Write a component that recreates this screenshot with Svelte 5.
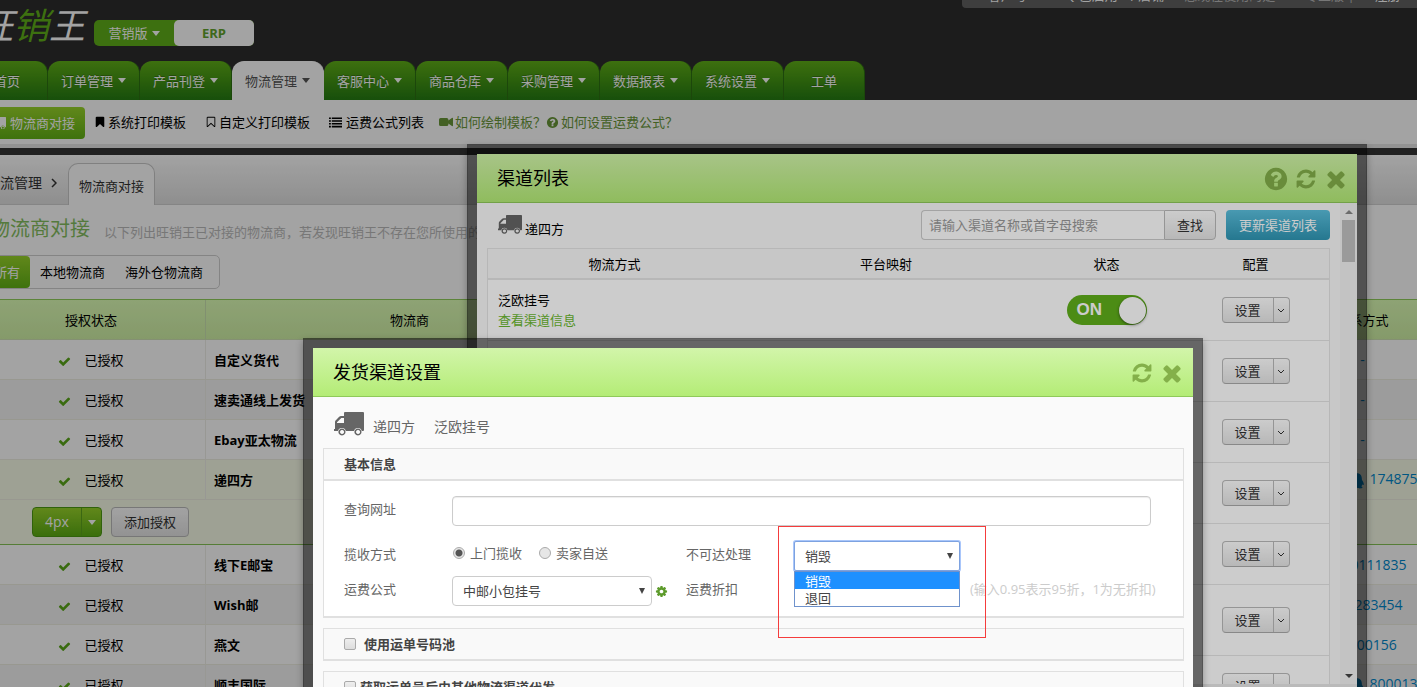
<script>
    const navItems = [
        { name: '首页', menu: false },
        { name: '订单管理', menu: true },
        { name: '产品刊登', menu: true },
        { name: '物流管理', menu: true, active: true },
        { name: '客服中心', menu: true },
        { name: '商品仓库', menu: true },
        { name: '采购管理', menu: true },
        { name: '数据报表', menu: true },
        { name: '系统设置', menu: true },
        { name: '工单', menu: false }
    ];

    const carriers = [
        { name: '自定义货代', contact: '-' },
        { name: '速卖通线上发货', contact: '-' },
        { name: 'Ebay亚太物流', contact: '-' },
        { name: '递四方', phone: '0755-8888', contact: '1748755620', qq: true, open: true },
        { name: '线下E邮宝', contact: '13800111835' },
        { name: 'Wish邮', contact: '0755283454' },
        { name: '燕文', contact: '400-00156' },
        { name: '顺丰国际', phone: '0755-8888', contact: '8000132460', qq: true }
    ];

    const channels = [
        { name: '泛欧挂号', on: true },
        { name: '', on: false },
        { name: '', on: false },
        { name: '', on: false },
        { name: '', on: false },
        { name: '', on: false, tall: true },
        { name: '', on: false }
    ];

    const filters = ['所有', '本地物流商', '海外仓物流商'];
    const undeliverable = ['销毁', '退回'];

    const icons = {
        times: 'M1490 1322q0 40-28 68l-136 136q-28 28-68 28t-68-28l-294-294-294 294q-28 28-68 28t-68-28l-136-136q-28-28-28-68t28-68l294-294-294-294q-28-28-28-68t28-68l136-136q28-28 68-28t68 28l294 294 294-294q28-28 68-28t68 28l136 136q28 28 28 68t-28 68l-294 294 294 294q28 28 28 68z',
        check: 'M1671 566q0 40-28 68l-724 724-136 136q-28 28-68 28t-68-28l-136-136-362-362q-28-28-28-68t28-68l136-136q28-28 68-28t68 28l294 295 656-657q28-28 68-28t68 28l136 136q28 28 28 68z',
        refresh: 'M1639 1056q0 5-1 7-64 268-268 434.500t-478 166.500q-146 0-282.500-55t-243.500-157l-129 129q-19 19-45 19t-45-19-19-45v-448q0-26 19-45t45-19h448q26 0 45 19t19 45-19 45l-137 137q71 66 161 102t187 36q134 0 250-65t186-179q11-17 53-117 8-23 30-23h192q13 0 22.500 9.500t9.500 22.500zm25-800v448q0 26-19 45t-45 19h-448q-26 0-45-19t-19-45 19-45l138-138q-148-137-349-137-134 0-250 65t-186 179q-11 17-53 117-8 23-30 23h-199q-13 0-22.500-9.500t-9.500-22.500v-7q65-268 270-434.500t480-166.500q146 0 284 55.500t245 156.500l130-129q19-19 45-19t45 19 19 45z',
        question: 'M1024 1376v-192q0-14-9-23t-23-9h-192q-14 0-23 9t-9 23v192q0 14 9 23t23 9h192q14 0 23-9t9-23zm256-672q0-88-55.500-163t-138.500-116-170-41q-243 0-371 213-15 24 8 42l132 100q7 6 19 6 16 0 25-12 53-68 86-92 34-24 86-24 48 0 85.500 26t37.500 59q0 38-20 61t-68 45q-63 28-115.500 86.500t-52.500 125.500v36q0 14 9 23t23 9h192q14 0 23-9t9-23q0-19 21.500-49.500t54.500-49.500q32-18 49-28.500t46-35 44.500-48 28-60.500 12.500-81zm384 192q0 209-103 385.500t-279.500 279.500-385.500 103-385.500-103-279.500-279.500-103-385.500 103-385.500 279.500-279.500 385.500-103 385.500 103 279.500 279.500 103 385.500z',
        bookmark: 'M1420 128q23 0 44 9 33 13 52.500 41t19.500 62v1289q0 34-19.500 62t-52.500 41q-19 8-44 8-48 0-83-32l-441-424-441 424q-36 33-83 33-23 0-44-9-33-13-52.500-41t-19.500-62v-1289q0-34 19.500-62t52.500-41q21-9 44-9h1048z',
        bookmarkOpen: 'M1408 256h-1024v1242l423-406 89-85 89 85 423 406v-1242zm12-128q23 0 44 9 33 13 52.500 41t19.500 62v1289q0 34-19.500 62t-52.500 41q-19 8-44 8-48 0-83-32l-441-424-441 424q-36 33-83 33-23 0-44-9-33-13-52.500-41t-19.500-62v-1289q0-34 19.500-62t52.500-41q21-9 44-9h1048z',
        list: 'M0 192h256v224H0zM384 192h1408v224H384zM0 576h256v224H0zM384 576h1408v224H384zM0 960h256v224H0zM384 960h1408v224H384zM0 1344h256v224H0zM384 1344h1408v224H384z',
        video: 'M200 384h800q200 0 200 200v130l450-330q142-60 142 60v904q0 120-142 60l-450-330v130q0 200-200 200H200q-200 0-200-200V584q0-200 200-200z',
        cog: 'M1152 896q0-106-75-181t-181-75-181 75-75 181 75 181 181 75 181-75 75-181zm512-109v222q0 12-8 23t-20 13l-185 28q-19 54-39 91 35 50 107 138 10 12 10 25t-9 23q-27 37-99 108t-94 71q-12 0-26-9l-138-108q-44 23-91 38-16 136-29 186-7 28-36 28h-222q-14 0-24.500-8.500t-11.500-21.500l-28-184q-49-16-90-37l-141 107q-10 9-25 9-14 0-25-11-126-114-165-168-7-10-7-23 0-12 8-23 15-21 51-66.500t54-70.500q-27-50-41-99l-183-27q-13-2-21-12.500t-8-23.500v-222q0-12 8-23t19-13l186-28q14-46 39-92-40-57-107-138-10-12-10-24 0-10 9-23 26-36 98.500-107.500t94.500-71.500q13 0 26 10l138 107q44-23 91-38 16-136 29-186 7-28 36-28h222q14 0 24.500 8.500t11.500 21.500l28 184q49 16 90 37l142-107q9-9 24-9 13 0 25 10 129 119 165 170 7 8 7 22 0 12-8 23-15 21-51 66.500t-54 70.500q26 50 41 98l183 28q13 2 21 12.500t8 23.500z',
        qq: 'M896 128c300 0 480 220 480 520 0 60 0 100 20 150 120 160 190 330 170 470-10 60-60 50-130-60-20 90-60 160-110 220 90 50 130 100 110 150-30 80-420 90-540 0-120 90-510 80-540 0-20-50 20-100 110-150-50-60-90-130-110-220-70 110-120 120-130 60-20-140 50-310 170-470 20-50 20-90 20-150 0-300 180-520 480-520z'
    };

    let pickup = $state('door');
    let handling = $state('销毁');
    let filter = $state('所有');
</script>

{#snippet icon(name, size)}
    <svg class="icon" width={size} height={size} viewBox="0 0 1792 1792" aria-hidden="true">
        <path d={icons[name]} fill="currentColor" fill-rule="evenodd" />
    </svg>
{/snippet}

{#snippet truck(width)}
    <svg class="icon" {width} viewBox="0 0 30 24" aria-hidden="true">
        <path
            fill="currentColor"
            fill-rule="evenodd"
            d="M10 1q0-1 1-1h18q1 0 1 1v17q0 1-1 1h-1.200a4 4 0 0 0-7.800 0h-8.200a4 4 0 0 0-7.800 0H0v-2h1v-7q0-1 .8-1.800l3.400-3.400Q6 4 7 4h3zM3 11h7V6H7.300L3 10.300z"
        />
        <path
            fill="currentColor"
            fill-rule="evenodd"
            d="M8 16.500a3.500 3.500 0 1 1-.1 0zM8 18a2 2 0 1 0 .1 0zM24 16.500a3.500 3.500 0 1 1-.1 0zM24 18a2 2 0 1 0 .1 0z"
        />
    </svg>
{/snippet}

<div class="screen">
    <div class="page">
        <header class="top">
            <div class="brand">
                <h1 class="logo">旺<span>销</span>王</h1>
                <div class="edition">
                    <button class="edition-menu">营销版 <i class="caret"></i></button>
                    <button class="edition-erp">ERP</button>
                </div>
            </div>
            <div class="account">
                <span>客户号:10</span>
                <span>Q 已启用1个店铺</span>
                <span class="plan">您现在使用的是 ERP 专业版 |</span>
                <span>注册</span>
                <span>|</span>
            </div>
        </header>

        <nav class="nav">
            {#each navItems as item}
                <a href="#nav" class="nav-item" class:active={item.active} class:plain={!item.menu}>
                    {item.name}
                    {#if item.menu}<i class="caret"></i>{/if}
                </a>
            {/each}
        </nav>

        <div class="subnav">
            <a href="#dock" class="current">{@render truck(16)}物流商对接</a>
            <a href="#sys">{@render icon('bookmark', 12)}系统打印模板</a>
            <a href="#own">{@render icon('bookmarkOpen', 12)}自定义打印模板</a>
            <a href="#fee" class="fee">{@render icon('list', 13)}运费公式列表</a>
            <span class="help">
                <a href="#video">{@render icon('video', 14)}如何绘制模板？</a>
                <a href="#formula">{@render icon('question', 13)}如何设置运费公式？</a>
            </span>
        </div>
        <div class="divider"></div>

        <div class="crumbs">
            <a href="#logistics">物流管理</a>
            <svg width="6" height="10" viewBox="0 0 6 10" aria-hidden="true">
                <path d="M1 1l4 4-4 4" fill="none" stroke="currentColor" stroke-width="1.500" />
            </svg>
            <span class="crumb-tab">物流商对接</span>
        </div>

        <div class="content">
            <div class="heading">
                <h2>物流商对接</h2>
                <p>以下列出旺销王已对接的物流商，若发现旺销王不存在您所使用的物流商，请联系我们</p>
            </div>

            <div class="filters">
                {#each filters as f}
                    <button class:selected={f === filter} onclick={() => (filter = f)}>{f}</button>
                {/each}
            </div>

            <table class="carriers">
                <thead>
                    <tr>
                        <th class="col-status">授权状态</th>
                        <th class="col-name">物流商</th>
                        <th></th>
                        <th class="col-contact">联系方式</th>
                    </tr>
                </thead>
                <tbody>
                    {#each carriers as row, i}
                        <tr class:alt={i % 2 === 1} class:open={row.open}>
                            <td class="status">
                                <span class="ok">{@render icon('check', 13)}</span>已授权
                            </td>
                            <td class="name">{row.name}</td>
                            <td></td>
                            <td class="contact">
                                {#if row.phone}<span>{row.phone}</span>{/if}
                                {#if row.qq}{@render icon('qq', 18)}{/if}
                                <a href="#contact">{row.contact}</a>
                            </td>
                        </tr>
                        {#if row.open}
                            <tr class="detail">
                                <td colspan="4">
                                    <div class="detail-actions">
                                        <span class="split-green">
                                            <button>4px</button>
                                            <button aria-label="更多"><i class="caret"></i></button>
                                        </span>
                                        <button class="btn">添加授权</button>
                                    </div>
                                </td>
                            </tr>
                        {/if}
                    {/each}
                </tbody>
            </table>
        </div>
    </div>

    <div class="shade"></div>

    <section class="modal modal-list" aria-label="渠道列表">
        <div class="modal-head">
            <h3>渠道列表</h3>
            <div class="tools">
                <button aria-label="帮助">{@render icon('question', 26)}</button>
                <button aria-label="刷新">{@render icon('refresh', 22)}</button>
                <button aria-label="关闭">{@render icon('times', 26)}</button>
            </div>
        </div>
        <div class="modal-scroll">
            <div class="list-body">
                <div class="toolbar">
                    <div class="carrier">{@render truck(24)}<span>递四方</span></div>
                    <div class="search">
                        <input type="text" aria-label="搜索渠道" placeholder="请输入渠道名称或首字母搜索" />
                        <button class="btn">查找</button>
                    </div>
                    <button class="btn-blue">更新渠道列表</button>
                </div>
                <table class="channels">
                    <thead>
                        <tr>
                            <th class="c-method">物流方式</th>
                            <th class="c-map">平台映射</th>
                            <th class="c-state">状态</th>
                            <th>配置</th>
                        </tr>
                    </thead>
                    <tbody>
                        {#each channels as channel}
                            <tr class:tall={channel.tall}>
                                <td class="method">
                                    {#if channel.name}
                                        <div>{channel.name}</div>
                                        <a href="#info">查看渠道信息</a>
                                    {/if}
                                </td>
                                <td></td>
                                <td>
                                    {#if channel.on}
                                        <label class="switch">
                                            <input type="checkbox" aria-label="启用渠道" checked />
                                            <span>ON</span>
                                            <i></i>
                                        </label>
                                    {/if}
                                </td>
                                <td>
                                    <span class="split">
                                        <button>设置</button>
                                        <button aria-label="更多">
                                            <svg width="8" height="5" viewBox="0 0 8 5" aria-hidden="true">
                                                <path d="M1 1l3 3 3-3" fill="none" stroke="currentColor" />
                                            </svg>
                                        </button>
                                    </span>
                                </td>
                            </tr>
                        {/each}
                    </tbody>
                </table>
            </div>
            <div class="scrollbar">
                <i class="arrow up"></i>
                <i class="thumb"></i>
                <i class="arrow down"></i>
            </div>
        </div>
        <div class="modal-foot"></div>
    </section>

    <div class="shade"></div>

    <section class="modal modal-form" aria-label="发货渠道设置">
        <div class="modal-head">
            <h3>发货渠道设置</h3>
            <div class="tools">
                <button aria-label="刷新">{@render icon('refresh', 22)}</button>
                <button aria-label="关闭">{@render icon('times', 26)}</button>
            </div>
        </div>
        <div class="form-body">
            <div class="route">
                {@render truck(30)}
                <span>递四方</span>
                <span>泛欧挂号</span>
            </div>

            <div class="panel">
                <div class="panel-title">基本信息</div>
                <div class="fields">
                    <label class="label" for="url">查询网址</label>
                    <input class="box wide" id="url" type="text" />

                    <span class="label second">揽收方式</span>
                    <div class="radios second">
                        <label><input type="radio" name="pickup" value="door" bind:group={pickup} />上门揽收</label>
                        <label><input type="radio" name="pickup" value="self" bind:group={pickup} />卖家自送</label>
                    </div>
                    <label class="label second" for="handling">不可达处理</label>
                    <div class="select handling second">
                        <select id="handling" bind:value={handling}>
                            {#each undeliverable as option}
                                <option value={option}>{option}</option>
                            {/each}
                        </select>
                        <i class="arrow down"></i>
                        <ul class="options">
                            {#each undeliverable as option}
                                <li class:chosen={option === handling}>{option}</li>
                            {/each}
                        </ul>
                        <div class="mark"></div>
                    </div>

                    <label class="label" for="formula">运费公式</label>
                    <div class="formula">
                        <div class="select">
                            <select id="formula"><option>中邮小包挂号</option></select>
                            <i class="arrow down"></i>
                        </div>
                        <button class="gear" aria-label="设置公式">{@render icon('cog', 13)}</button>
                    </div>
                    <label class="label" for="discount">运费折扣</label>
                    <div class="discount">
                        <input class="box" id="discount" type="text" />
                        <span>(输入0.95表示95折，1为无折扣)</span>
                    </div>
                </div>
            </div>

            <div class="panel">
                <label class="panel-title check"><input type="checkbox" />使用运单号码池</label>
            </div>
            <div class="panel">
                <label class="panel-title check tight"><input type="checkbox" />获取运单号后由其他物流渠道代发</label>
            </div>
        </div>
    </section>
</div>

<style>
    :global(body) {
        margin: 0;
        background: #fff;
    }
    .screen {
        position: relative;
        height: 100vh;
        overflow: hidden;
        font: 13px/20px "Open Sans", "Noto Sans CJK SC", sans-serif;
        color: #000;
    }
    .screen * {
        box-sizing: border-box;
    }
    a {
        color: inherit;
        text-decoration: none;
    }
    button, input, select {
        margin: 0;
        padding: 0;
        font: inherit;
        color: inherit;
    }
    button {
        border: 0;
        background: none;
        cursor: pointer;
    }
    h1, h2, h3, p, ul {
        margin: 0;
        padding: 0;
        font-weight: normal;
    }
    .icon {
        flex: none;
    }
    .caret {
        display: inline-block;
        border: 4px solid transparent;
        border-top: 5px solid currentColor;
        border-bottom: 0;
    }
    .shade {
        position: absolute;
        inset: 0;
        background: rgba(0, 0, 0, 0.2);
    }

    /* page header */
    .page {
        margin: 0 -46px 0 -33px;
    }
    .top {
        display: flex;
        justify-content: space-between;
        align-items: flex-start;
        height: 61px;
        background: #2c2c2c;
    }
    .brand {
        display: flex;
        align-items: flex-start;
        padding-left: 10px;
    }
    .logo {
        width: 117px;
        font-size: 36px;
        line-height: 52px;
        font-style: italic;
        color: #fff;
        white-space: nowrap;
    }
    .logo span {
        color: #61af19;
    }
    .edition {
        display: flex;
        margin-top: 20px;
        border-radius: 5px;
        background: #61af19;
    }
    .edition button {
        display: flex;
        align-items: center;
        justify-content: center;
        gap: 4px;
        width: 80px;
        height: 26px;
        border-radius: 5px;
        color: #fff;
    }
    .edition .edition-erp {
        background: #fff;
        color: #62a32d;
        font-weight: bold;
    }
    .account {
        display: flex;
        gap: 20px;
        width: 501px;
        height: 28px;
        margin-top: -20px;
        padding: 5px 0 0 26px;
        border-radius: 4px;
        background: #626262;
        color: #fff;
        white-space: nowrap;
    }
    .account .plan {
        color: #bbb;
    }
    .nav {
        display: flex;
        background: #2e2e2e;
    }
    .nav-item {
        display: flex;
        align-items: center;
        justify-content: center;
        gap: 5px;
        width: 92px;
        height: 39px;
        border-radius: 12px 12px 0 0;
        border-right: 1px solid #2c7012;
        background: linear-gradient(#61b018, #257c12);
        color: #fff;
        text-shadow: 0 -1px 0 rgba(0, 0, 0, 0.25);
    }
    .nav-item.plain {
        width: 81px;
    }
    .nav-item.active {
        background: #fff;
        border-color: #fff;
        color: #555;
        text-shadow: none;
    }
    .subnav {
        display: flex;
        align-items: center;
        gap: 19px;
        height: 44px;
        padding: 0 10px;
        background: #fff;
    }
    .subnav a {
        display: flex;
        align-items: center;
        gap: 2px;
    }
    .subnav .fee {
        gap: 4px;
    }
    .subnav .current {
        gap: 4px;
        width: 108px;
        height: 32px;
        padding-right: 10px;
        margin: 2px -10px 0 0;
        justify-content: flex-end;
        border-radius: 4px;
        background: linear-gradient(#99d52b, #62b316);
        color: #fff;
    }
    .help {
        display: flex;
        margin-left: -4px;
        color: #6a983a;
    }
    .divider {
        height: 11px;
        border-top: 4px solid #e6e6e6;
        background: #353535;
    }
    .crumbs {
        display: flex;
        align-items: center;
        gap: 9px;
        height: 50px;
        padding: 6px 19px 0;
        border-bottom: 1px solid #d1d1d1;
        background: linear-gradient(#fff, #e0e0e0);
        color: #333;
        font-size: 14px;
    }
    .crumb-tab {
        align-self: flex-end;
        height: 42px;
        margin: 0 0 -1px 2px;
        padding: 12px 10px 0;
        border: 1px solid #c8c8c8;
        border-bottom: 0;
        border-radius: 10px 10px 0 0;
        background: #fff;
        font-size: 13px;
    }

    /* carriers page */
    .content {
        padding: 0 0 0 10px;
        background: #fff;
    }
    .heading {
        display: flex;
        align-items: flex-end;
        gap: 14px;
        padding: 10px 0 13px 13px;
        white-space: nowrap;
    }
    .heading h2 {
        font-size: 20px;
        line-height: 27px;
        color: #85c060;
    }
    .heading p {
        color: #bbb;
    }
    .filters {
        display: flex;
        width: fit-content;
        margin-left: 6px;
        padding: 0 6px 0 0;
        border: 1px solid #d0d0d0;
        border-radius: 5px;
    }
    .filters button {
        height: 32px;
        padding: 0 10px;
        border-radius: 4px;
    }
    .filters .selected {
        background: linear-gradient(#99d52b, #62b316);
        color: #fff;
    }
    .carriers {
        width: 100%;
        margin-top: 10px;
        border-collapse: separate;
        border-spacing: 0;
        table-layout: fixed;
        border-top: 1px solid #92cf5c;
    }
    .carriers th {
        height: 40px;
        padding: 0;
        border-bottom: 1px solid #cfe3b5;
        border-right: 1px solid #cbe2b0;
        background: linear-gradient(#dfffb7, #d1f2a7);
        font-weight: normal;
    }
    .col-status {
        width: 229px;
    }
    .col-name {
        width: 408px;
    }
    .col-contact {
        width: 200px;
    }
    .carriers td {
        height: 40px;
        padding: 0;
        border-bottom: 1px solid #efefe3;
        border-right: 1px solid #efefe9;
    }
    .carriers .alt td {
        background: #f6f6f6;
    }
    .carriers .open td, .carriers .detail td {
        background: #f8fde9;
    }
    .carriers .detail td {
        height: 45px;
        border-bottom-color: #86c555;
    }
    .carriers .status {
        text-align: center;
    }
    .ok {
        margin-right: 13px;
        color: #5aa818;
    }
    .ok .icon, .contact .icon {
        vertical-align: middle;
    }
    .carriers .name {
        padding-left: 8px;
        font-weight: bold;
    }
    .carriers .contact {
        color: #0088cc;
        font-size: 14px;
        text-align: center;
        white-space: nowrap;
    }
    .detail-actions {
        display: flex;
        gap: 9px;
        padding-left: 55px;
    }
    .split-green {
        display: flex;
        border: 1px solid #4b9a12;
        border-radius: 4px;
        background: linear-gradient(#99d52b, #5cad14);
        color: #fff;
        font-size: 14px;
    }
    .split-green button {
        display: flex;
        align-items: center;
        justify-content: center;
        width: 48px;
        height: 28px;
    }
    .split-green button + button {
        width: 20px;
        border-left: 1px solid #5da31d;
    }
    .btn {
        height: 30px;
        padding: 0 12px;
        border: 1px solid #bbb;
        border-radius: 4px;
        background: linear-gradient(#fff, #e6e6e6);
        color: #333;
    }

    /* modals */
    .modal {
        position: absolute;
        width: 900px;
        border: 10px solid rgba(0, 0, 0, 0.5);
        background: #fafafa;
        background-clip: padding-box;
        box-shadow: 0 3px 7px rgba(0, 0, 0, 0.3);
    }
    .modal-list {
        left: 467px;
        top: 144px;
    }
    .modal-form {
        left: 303px;
        top: 338px;
    }
    .modal-head {
        display: flex;
        align-items: center;
        justify-content: space-between;
        height: 49px;
        padding: 0 8px 0 20px;
        border-bottom: 1px solid #8fca5a;
        background: linear-gradient(#d2f5aa, #b4ec76);
    }
    .modal-head h3 {
        font-size: 18px;
        line-height: 24px;
    }
    .tools {
        display: flex;
        align-items: center;
        gap: 6px;
        padding-top: 2px;
        color: #84b04a;
    }
    .tools button, .gear {
        display: flex;
    }
    .modal-scroll {
        display: flex;
        height: 481px;
        overflow: hidden;
    }
    .list-body {
        flex: 1;
        padding: 7px 10px;
    }
    .toolbar {
        display: flex;
        align-items: center;
        gap: 10px;
        margin-bottom: 8px;
    }
    .carrier {
        display: flex;
        align-items: flex-end;
        gap: 3px;
        flex: 1;
        height: 30px;
        padding-left: 11px;
    }
    .carrier .icon {
        align-self: center;
        color: #666;
    }
    .carrier span {
        line-height: 22px;
    }
    .search {
        display: flex;
    }
    .search input {
        width: 243px;
        height: 30px;
        padding: 0 7px;
        border: 1px solid #ccc;
        border-right: 0;
        border-radius: 4px 0 0 4px;
        background: #fff;
    }
    .search input::placeholder {
        color: #999;
    }
    .search .btn {
        border-radius: 0 4px 4px 0;
    }
    .btn-blue {
        height: 30px;
        padding: 0 13px;
        border-radius: 4px;
        background: linear-gradient(#5bc0de, #2f96b4);
        color: #fff;
    }
    .channels {
        width: 100%;
        border: 1px solid #e5e5e5;
        border-spacing: 0;
        background: #fff;
        table-layout: fixed;
    }
    .channels th {
        height: 31px;
        padding: 0;
        border-bottom: 2px solid #e5e5e5;
        background: #f9f9f9;
        font-weight: normal;
    }
    .c-method {
        width: 253px;
    }
    .c-map {
        width: 290px;
    }
    .c-state {
        width: 151px;
    }
    .channels td {
        height: 61px;
        padding: 0;
        border-bottom: 1px solid #e5e5e5;
        text-align: center;
    }
    .channels .tall td {
        height: 71px;
    }
    .channels .method {
        padding-left: 10px;
        text-align: left;
    }
    .method a {
        color: #6ab82e;
    }
    .switch {
        display: inline-flex;
        align-items: center;
        justify-content: space-between;
        width: 80px;
        height: 30px;
        padding: 0 1px 0 10px;
        border-radius: 15px;
        background: #5faf1b;
        color: #fff;
        font: bold 17px/30px "Liberation Sans", sans-serif;
        vertical-align: middle;
    }
    .switch input {
        position: absolute;
        opacity: 0;
    }
    .switch i {
        width: 27px;
        height: 27px;
        border-radius: 50%;
        background: #fff;
        box-shadow: 0 1px 3px rgba(0, 0, 0, 0.5);
    }
    .split {
        display: inline-flex;
        border: 1px solid #bbb;
        border-bottom-color: #aaa;
        border-radius: 4px;
        background: linear-gradient(#fff, #e6e6e6);
        color: #333;
        vertical-align: middle;
    }
    .split button {
        display: flex;
        align-items: center;
        justify-content: center;
        width: 50px;
        height: 24px;
    }
    .split button + button {
        width: 16px;
        border-left: 1px solid #bbb;
    }
    .scrollbar {
        display: flex;
        flex-direction: column;
        align-items: center;
        gap: 6px;
        width: 17px;
        padding: 7px 0 6px;
        background: #f4f4f4;
    }
    .arrow {
        border: 4px solid transparent;
    }
    .arrow.up {
        border-top: 0;
        border-bottom-color: #888;
    }
    .arrow.down {
        border-bottom: 0;
        border-top-color: #444;
    }
    .scrollbar .down {
        margin-top: auto;
    }
    .thumb {
        width: 13px;
        height: 42px;
        background: #c1c1c1;
    }
    .modal-foot {
        height: 60px;
        background: #e9e9e9;
    }

    /* channel settings form */
    .form-body {
        padding: 15px 9px 10px 10px;
        color: #666;
    }
    .route {
        display: flex;
        align-items: flex-start;
        gap: 19px;
        height: 36px;
        padding-left: 11px;
        font-size: 14px;
    }
    .route .icon {
        margin-right: -10px;
    }
    .route span {
        padding-top: 5px;
    }
    .panel {
        margin-bottom: 10px;
        border: 1px solid #e0e0e0;
        border-bottom-width: 2px;
    }
    .panel-title {
        height: 30px;
        padding: 5px 20px;
        background: #f9f9f9;
        color: #444;
        font-weight: bold;
    }
    .panel-title.check {
        display: flex;
        align-items: center;
        gap: 8px;
    }
    .panel-title.tight {
        gap: 4px;
    }
    .fields {
        display: grid;
        grid-template-columns: 108px 234px 108px minmax(0, 1fr);
        row-gap: 5px;
        padding: 15px 32px 10px 20px;
        border-top: 2px solid #e0e0e0;
        background: #fff;
    }
    .label {
        padding-top: 3px;
    }
    .second {
        margin-top: 10px;
    }
    .box {
        height: 30px;
        border: 1px solid #ccc;
        border-radius: 4px;
        background: #fff;
    }
    .wide {
        grid-column: span 3;
        box-shadow: inset 0 1px 1px rgba(0, 0, 0, 0.075);
    }
    .radios {
        display: flex;
        gap: 17px;
        padding-left: 1px;
    }
    .radios label {
        display: flex;
        align-items: center;
        gap: 5px;
        height: 24px;
    }
    input[type='radio'] {
        appearance: none;
        width: 12px;
        height: 12px;
        border: 1px solid #aaa;
        border-radius: 50%;
        background: #e6e6e6;
    }
    input[type='radio']:checked {
        background: radial-gradient(circle, #555 3px, #e6e6e6 4px);
    }
    .check input {
        appearance: none;
        width: 12px;
        height: 12px;
        border: 1px solid #aaa;
        border-radius: 2px;
        background: linear-gradient(#eee, #ddd);
    }
    .select {
        display: grid;
        align-items: center;
        justify-items: end;
        position: relative;
        width: 200px;
        height: 30px;
        color: #444;
        font-family: "Noto Sans CJK SC", sans-serif;
    }
    .select select {
        grid-area: 1 / 1;
        appearance: none;
        width: 100%;
        height: 30px;
        padding: 0 10px;
        border: 1px solid #ccc;
        border-radius: 4px;
        background: #fff;
    }
    .select .arrow {
        grid-area: 1 / 1;
        z-index: 1;
        margin-right: 7px;
        border-width: 6px 3px 0;
    }
    .handling {
        width: 166px;
    }
    .handling select {
        border-color: #7da2e0;
        border-radius: 2px;
        box-shadow: 0 0 0 1px #a9c6fa;
    }
    .options {
        position: absolute;
        top: 30px;
        left: 0;
        right: 0;
        z-index: 2;
        border: 1px solid #6f92cc;
        background: #fff;
        list-style: none;
    }
    .options li {
        padding-left: 10px;
        line-height: 17px;
    }
    .options .chosen {
        background: #1e90ff;
        color: #fff;
    }
    .mark {
        position: absolute;
        left: -16px;
        top: -15px;
        z-index: 3;
        width: 208px;
        height: 112px;
        border: 1px solid #f53c3c;
    }
    .formula {
        display: flex;
        align-items: center;
        gap: 3px;
    }
    .gear {
        color: #5c9a2a;
    }
    .discount {
        display: flex;
        gap: 10px;
        white-space: nowrap;
        color: #ccc;
    }
    .discount .box {
        flex: none;
        width: 166px;
    }
    .discount span {
        padding-top: 3px;
    }
</style>
